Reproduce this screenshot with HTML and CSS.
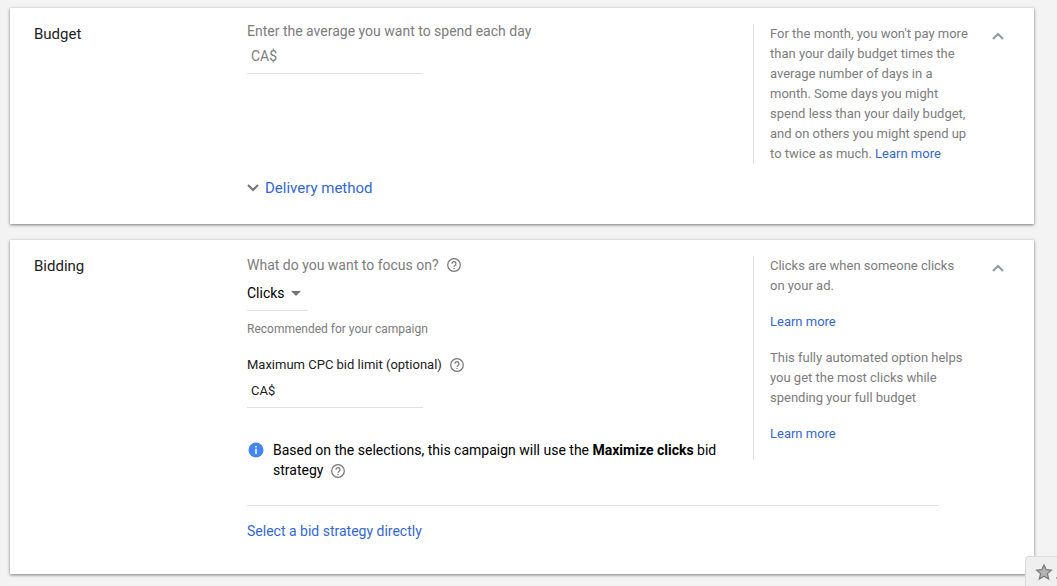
FILE: index.html
```html
<!DOCTYPE html>
<html lang="en">
<head>
    <meta charset="UTF-8">
    <meta name="viewport" content="width=device-width, initial-scale=1.0">
    <title>Campaign settings</title>
    <link rel="stylesheet" href="styles.css">
</head>
<body>
    <main class="page">
        <section class="card">
            <h2 class="card-title">Budget</h2>
            <div class="card-body">
                <div class="card-top">
                    <div class="fields">
                        <label class="question" for="budget">Enter the average you want to spend each day</label>
                        <input class="money large" type="text" id="budget" name="budget" placeholder="CA$">
                    </div>
                    <aside class="notes">
                        For the month, you won't pay more than your daily budget times the average number of days in a month. Some days you might spend less than your daily budget, and on others you might spend up to twice as much. <a href="#">Learn more</a>
                    </aside>
                </div>
                <button type="button" class="expand">
                    <svg width="12" height="8" viewBox="0 0 12 8"><path d="M1 1l5 5 5-5" fill="none" stroke="#757575" stroke-width="2"/></svg>
                    Delivery method
                </button>
            </div>
            <button type="button" class="collapse" aria-label="Collapse budget">
                <svg width="12" height="8" viewBox="0 0 12 8"><path d="M1 7l5-5 5 5" fill="none" stroke="#9297a0" stroke-width="2"/></svg>
            </button>
        </section>

        <section class="card">
            <h2 class="card-title">Bidding</h2>
            <div class="card-body">
                <div class="card-top">
                    <div class="fields">
                        <div class="label-row">
                            <label class="question" for="focus">What do you want to focus on?</label>
                            <button type="button" class="help" aria-label="Help">
                                <svg width="14" height="14" viewBox="0 0 14 14"><circle cx="7" cy="7" r="6.3" fill="none" stroke="#757575" stroke-width="1.2"/><path d="M5 5.8a2 2 0 1 1 3.2 1.5C7.5 7.8 7 8.1 7 9" fill="none" stroke="#757575" stroke-width="1.2"/><path d="M6.4 9.9h1.2v1.2H6.4z" fill="#757575"/></svg>
                            </button>
                        </div>
                        <div class="select-wrap">
                            <select id="focus" name="focus">
                                <option value="clicks">Clicks</option>
                                <option value="conversions">Conversions</option>
                            </select>
                            <svg class="caret" width="10" height="5" viewBox="0 0 10 5"><path d="M0 0h10L5 5z" fill="#757575"/></svg>
                        </div>
                        <p class="hint">Recommended for your campaign</p>
                        <div class="label-row">
                            <label for="limit">Maximum CPC bid limit (optional)</label>
                            <button type="button" class="help" aria-label="Help">
                                <svg width="14" height="14" viewBox="0 0 14 14"><circle cx="7" cy="7" r="6.3" fill="none" stroke="#757575" stroke-width="1.2"/><path d="M5 5.8a2 2 0 1 1 3.2 1.5C7.5 7.8 7 8.1 7 9" fill="none" stroke="#757575" stroke-width="1.2"/><path d="M6.4 9.9h1.2v1.2H6.4z" fill="#757575"/></svg>
                            </button>
                        </div>
                        <input class="money" type="text" id="limit" name="limit" value="CA$">
                        <div class="info">
                            <svg class="info-icon" width="16" height="16" viewBox="0 0 16 16"><circle cx="8" cy="8" r="7.5" fill="#4285f4"/><path d="M7.2 4h1.6v1.6H7.2zM7.2 6.8h1.6V12H7.2z" fill="#fff"/></svg>
                            <p>Based on the selections, this campaign will use the <strong>Maximize clicks</strong> bid strategy
                                <button type="button" class="help" aria-label="Help">
                                    <svg width="14" height="14" viewBox="0 0 14 14"><circle cx="7" cy="7" r="6.3" fill="none" stroke="#757575" stroke-width="1.2"/><path d="M5 5.8a2 2 0 1 1 3.2 1.5C7.5 7.8 7 8.1 7 9" fill="none" stroke="#757575" stroke-width="1.2"/><path d="M6.4 9.9h1.2v1.2H6.4z" fill="#757575"/></svg>
                                </button>
                            </p>
                        </div>
                    </div>
                    <aside class="notes">
                        <p>Clicks are when someone clicks on your ad.</p>
                        <p><a href="#">Learn more</a></p>
                        <p>This fully automated option helps you get the most clicks while spending your full budget</p>
                        <p><a href="#">Learn more</a></p>
                    </aside>
                </div>
                <div class="card-footer">
                    <a href="#">Select a bid strategy directly</a>
                </div>
            </div>
            <button type="button" class="collapse" aria-label="Collapse bidding">
                <svg width="12" height="8" viewBox="0 0 12 8"><path d="M1 7l5-5 5 5" fill="none" stroke="#9297a0" stroke-width="2"/></svg>
            </button>
        </section>
    </main>

    <!-- Bookmark tab -->
    <button type="button" class="star-tab" aria-label="Bookmark">
        <svg width="22" height="18" viewBox="0 0 22 18"><path d="M9 2l2.200 4.700 5.100.5-3.900 3.400 1.300 5.400L9 13.300 4.300 16l1.300-5.400L1.700 7.200l5.100-.5z" fill="#b4b4b4" stroke="#777" stroke-width="1.2"/><path d="M21 14h1v2h-1z" fill="#aaa"/></svg>
    </button>
</body>
</html>
```

FILE: styles.css
```css
* {
    box-sizing: border-box;
}
body {
    margin: 0;
    background-color: #f3f3f3;
    color: #212121;
    font-family: Roboto, Arial, sans-serif;
    font-size: 14px;
    line-height: 20px;
}
p {
    margin: 0;
}
a {
    color: #3367d6;
    text-decoration: none;
}
button {
    padding: 0;
    border: none;
    background: none;
    font: inherit;
    cursor: pointer;
}
.page {
    display: flex;
    flex-direction: column;
    gap: 16px;
    padding: 8px 23px 12px 10px;
}
.card {
    display: flex;
    align-items: flex-start;
    padding: 12px 16px 26px 24px;
    background-color: #fff;
    box-shadow: 0 1px 3px rgba(0, 0, 0, 0.5);
}
.card-title {
    flex: 0 0 213px;
    margin: 4px 0 0;
    font-size: 15px;
    font-weight: 400;
}
.card-body {
    flex: 1;
}
.card-top {
    display: flex;
    align-items: flex-start;
}
.fields {
    flex: 1;
    font-size: 13px;
}
.question {
    display: block;
    color: #7c7c7c;
    font-size: 14px;
    line-height: 22px;
}
.label-row .question {
    line-height: 26px;
}
.label-row {
    display: flex;
    align-items: center;
    min-height: 24px;
}
.help {
    display: inline-block;
    width: 14px;
    height: 14px;
    margin-left: 8px;
    vertical-align: middle;
}
.help svg, .collapse svg, .star-tab svg {
    display: block;
}
.money {
    display: block;
    width: 176px;
    height: 31px;
    padding: 0 4px 3px;
    border: none;
    border-bottom: 1px solid #e0e0e0;
    background: none;
    color: #212121;
    font: 13px Roboto, Arial, sans-serif;
    outline: none;
}
.money.large {
    height: 32px;
    font-size: 14px;
}
.money::placeholder {
    color: #7c7c7c;
}
.select-wrap {
    position: relative;
    width: 61px;
}
.select-wrap select {
    display: block;
    width: 100%;
    height: 33px;
    padding: 0 0 2px;
    border: none;
    border-bottom: 1px solid #e0e0e0;
    border-radius: 0;
    background: none;
    color: #000;
    font: 14px Roboto, Arial, sans-serif;
    appearance: none;
    outline: none;
}
.caret {
    position: absolute;
    top: 13px;
    right: 7px;
    pointer-events: none;
}
.hint {
    margin: 8px 0 14px;
    color: #7c7c7c;
    font-size: 12px;
}
.info {
    display: flex;
    gap: 9px;
    margin-top: 32px;
    color: #000;
    font-size: 14px;
}
.info-icon {
    flex: none;
    margin: 2px 0 0 1px;
}
.info strong {
    font-weight: 700;
}
.info .help {
    margin-left: 4px;
}
.notes {
    flex: 0 0 225px;
    margin: 4px 0 0;
    padding: 0 8px 0 16px;
    border-left: 1px solid #e0e0e0;
    color: #7c7c7c;
    font-size: 13px;
}
.notes p {
    margin-bottom: 16px;
}
.expand {
    display: flex;
    align-items: center;
    gap: 6px;
    margin-top: 14px;
    color: #3367d6;
    font-size: 15px;
}
.card-footer {
    margin: 25px 40px 7px 0;
    padding-top: 15px;
    border-top: 1px solid #e0e0e0;
}
.collapse {
    display: flex;
    align-items: center;
    justify-content: center;
    flex: 0 0 40px;
    height: 24px;
    margin-top: 4px;
}
.star-tab {
    position: fixed;
    right: 0;
    bottom: 0;
    width: 32px;
    height: 30px;
    padding-left: 9px;
    border: 1px solid #dadada;
    border-width: 1px 0 0 1px;
    border-radius: 4px 0 0 0;
    background-color: #efefef;
}
```
